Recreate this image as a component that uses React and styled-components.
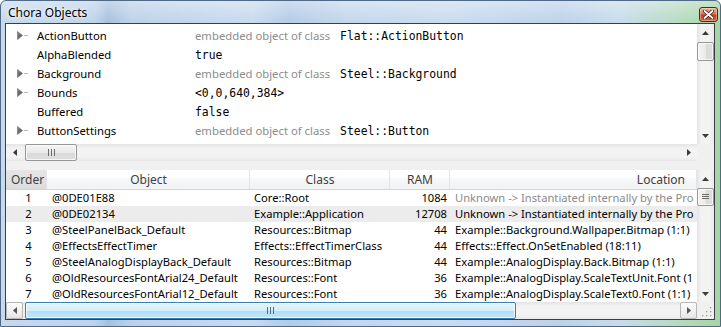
import React from 'react';
import styled, { createGlobalStyle } from 'styled-components';

const SANS = `"Noto Sans", "Open Sans", sans-serif`;
const MONO = `"DejaVu Sans Mono", "Liberation Mono", monospace`;

const GlobalStyle = createGlobalStyle`
  html, body {
    margin: 0;
    padding: 0;
    background: #ffffff;
    overflow: hidden;
  }
  * {
    box-sizing: border-box;
  }
`;

const Window = styled.div`
  width: 721px;
  height: 327px;
  display: flex;
  flex-direction: column;
  padding: 0 5px 6px 4px;
  border: 1px solid #4f6a86;
  border-radius: 6px 6px 0 0;
  background:
    linear-gradient(180deg, rgba(255, 255, 255, 0.35) 0px, rgba(255, 255, 255, 0) 22px),
    linear-gradient(90deg, #c6d9ed 0%, #bed3ea 13%, #a7c0dc 15%, #bcd1e9 18%, #c8daee 35%,
      #b3cbe6 40%, #c3d6ec 48%, #c9dbef 62%, #bcd2ea 78%, #c6dcec 86%, #b5dabc 95%, #a8d4a4 100%);
  font-family: ${SANS};
`;

const TitleBar = styled.div`
  height: 22px;
  display: flex;
  align-items: center;
  justify-content: space-between;
  padding: 1px 0 0 3px;
`;

const Title = styled.span`
  font-size: 12px;
  color: #000;
  text-shadow: 0 0 6px rgba(255, 255, 255, 0.9), 0 0 3px rgba(255, 255, 255, 0.9);
`;

const CloseButton = styled.div`
  width: 19px;
  height: 15px;
  margin-top: 3px;
  margin-right: -3px;
  display: flex;
  align-items: center;
  justify-content: center;
  border: 1px solid #5e2318;
  border-radius: 3px;
  background: linear-gradient(180deg, #eab4a3 0%, #d9775f 45%, #c2401f 55%, #d6654a 100%);
  box-shadow: inset 0 0 0 1px rgba(255, 255, 255, 0.35);
`;

const Client = styled.div`
  flex: 1;
  display: flex;
  flex-direction: column;
  border: 1px solid #3a3f46;
  background: #f0f0f0;
  min-height: 0;
`;

const PropPanel = styled.div`
  height: 137px;
  display: grid;
  grid-template-columns: 1fr 17px;
  grid-template-rows: 1fr 17px;
  background: #fff;
`;

const PropList = styled.div`
  padding-top: 2px;
  overflow: hidden;
`;

const PropRow = styled.div`
  height: 19px;
  display: flex;
  align-items: center;
  font-size: 11.3px;
  color: #000;
`;

const Expander = styled.span`
  width: 31px;
  padding-left: 11px;
  display: flex;
  align-items: center;
`;

const PropName = styled.span`
  width: 158px;
`;

const Muted = styled.span`
  color: #8c8c8c;
  margin-right: 10px;
`;

const Mono = styled.span`
  font-family: ${MONO};
  font-size: 11.4px;
  color: #000;
`;

const VScroll = styled.div`
  display: flex;
  flex-direction: column;
  background: linear-gradient(90deg, #e4e4e4 0%, #f3f3f3 25%, #f3f3f3 75%, #e9e9e9 100%);
`;

const HScroll = styled.div`
  display: flex;
  align-items: stretch;
  background: linear-gradient(180deg, #e4e4e4 0%, #f3f3f3 25%, #f3f3f3 75%, #e9e9e9 100%);
`;

const ArrowButton = styled.div`
  width: 17px;
  height: 17px;
  flex: none;
  display: flex;
  align-items: center;
  justify-content: center;
  border: 1px solid ${(p) => (p.$hot ? '#b6b6b6' : 'transparent')};
  border-radius: 2px;
  background: ${(p) => (p.$hot ? 'linear-gradient(180deg, #fdfdfd, #e6e6e6)' : 'transparent')};
`;

const Track = styled.div`
  flex: 1;
  display: flex;
  flex-direction: ${(p) => (p.$vertical ? 'column' : 'row')};
  align-items: stretch;
  min-width: 0;
  min-height: 0;
`;

const Thumb = styled.div`
  flex: none;
  display: flex;
  align-items: center;
  justify-content: center;
  border: 1px solid ${(p) => (p.$hot ? '#3c7fb1' : '#979797')};
  border-radius: 2px;
  background: ${(p) =>
    p.$hot
      ? 'linear-gradient(180deg, #e6f5fd 0%, #d3edfb 50%, #b2dcf5 51%, #c2e4f8 100%)'
      : p.$vertical
      ? 'linear-gradient(90deg, #f4f4f4 0%, #eaeaea 50%, #dadada 51%, #dedede 100%)'
      : 'linear-gradient(180deg, #f4f4f4 0%, #eaeaea 50%, #dadada 51%, #dedede 100%)'};
  box-shadow: inset 0 0 0 1px rgba(255, 255, 255, 0.7);
`;

const Corner = styled.div`
  background: #f0f0f0;
  display: flex;
  align-items: flex-end;
  justify-content: flex-end;
  padding: 0 2px 2px 0;
`;

const Splitter = styled.div`
  height: 9px;
  background: #f0f0f0;
`;

const ObjPanel = styled.div`
  flex: 1;
  display: grid;
  grid-template-columns: 1fr 17px;
  grid-template-rows: 1fr 17px;
  background: #fff;
  min-height: 0;
`;

const Table = styled.div`
  overflow: hidden;
  font-size: 11.2px;
`;

const COLS = '41px 203px 140px 60px 247px';

const HeaderRow = styled.div`
  height: 20px;
  display: grid;
  grid-template-columns: ${COLS};
  border-bottom: 1px solid #d5d5d5;
  background: linear-gradient(180deg, #ffffff 0%, #ffffff 40%, #f7f8fa 41%, #f1f2f4 100%);
`;

const HeaderCell = styled.div`
  display: flex;
  align-items: center;
  justify-content: ${(p) => p.$align || 'center'};
  padding: 0 ${(p) => (p.$align === 'flex-end' ? '11px' : '4px')} 0 5px;
  border-right: 1px solid #e3e4e6;
  color: #404040;
  font-size: 12px;
  background: ${(p) => (p.$active ? 'linear-gradient(180deg, #e6e6e6, #dcdcdc)' : 'transparent')};
  white-space: nowrap;
  overflow: hidden;
`;

const Row = styled.div`
  height: 16px;
  display: grid;
  grid-template-columns: ${COLS};
  align-items: center;
  background: ${(p) => (p.$highlight ? '#ececec' : '#fff')};
`;

const Cell = styled.div`
  padding: ${(p) => p.$pad || '0 4px'};
  text-align: ${(p) => p.$align || 'left'};
  color: ${(p) => (p.$muted ? '#8a8a8a' : '#000')};
  white-space: nowrap;
  overflow: hidden;
  line-height: 16px;
`;

const Triangle = ({ dir = 'down', color = '#3c3c3c' }) => {
  const pts = {
    up: '0,4 3.5,0 7,4',
    down: '0,0 7,0 3.5,4',
    left: '4,0 4,7 0,3.5',
    right: '0,0 4,3.5 0,7',
  }[dir];
  const vertical = dir === 'up' || dir === 'down';
  return (
    <svg width={vertical ? 7 : 4} height={vertical ? 4 : 7} viewBox={vertical ? '0 0 7 4' : '0 0 4 7'}>
      <polygon points={pts} fill={color} />
    </svg>
  );
};

const TreeArrow = () => (
  <svg width="14" height="9" viewBox="0 0 14 9">
    <defs>
      <linearGradient id="ta" x1="0" y1="0" x2="1" y2="1">
        <stop offset="0" stopColor="#8a8a8a" />
        <stop offset="1" stopColor="#4a4a4a" />
      </linearGradient>
    </defs>
    <polygon points="0.5,0.5 5.5,4.5 0.5,8.5" fill="url(#ta)" stroke="#6a6a6a" strokeWidth="0.6" />
    <line x1="7" y1="4.5" x2="11" y2="4.5" stroke="#b8b8b8" strokeWidth="1" />
  </svg>
);

const GripV = () => (
  <svg width="7" height="6" viewBox="0 0 7 6">
    {[0.5, 2.5, 4.5].map((y) => (
      <line key={y} x1="0" y1={y} x2="7" y2={y} stroke="#6d6d6d" strokeWidth="1" />
    ))}
  </svg>
);

const GripH = ({ color = '#6d6d6d' }) => (
  <svg width="7" height="7" viewBox="0 0 7 7">
    {[0.5, 3.5, 6.5].map((x) => (
      <line key={x} x1={x} y1="0" x2={x} y2="7" stroke={color} strokeWidth="1" />
    ))}
  </svg>
);

const SizeGrip = () => (
  <svg width="11" height="11" viewBox="0 0 11 11">
    {[
      [9, 1],
      [9, 5],
      [5, 5],
      [9, 9],
      [5, 9],
      [1, 9],
    ].map(([x, y]) => (
      <g key={`${x}-${y}`}>
        <rect x={x + 0.6} y={y + 0.6} width="1.4" height="1.4" fill="#ffffff" />
        <rect x={x} y={y} width="1.4" height="1.4" fill="#9c9c9c" />
      </g>
    ))}
  </svg>
);

const CloseGlyph = () => (
  <svg width="11" height="9" viewBox="0 0 11 9">
    <path d="M1.5 1 L9.5 8 M9.5 1 L1.5 8" stroke="#4a1a10" strokeWidth="3.4" strokeLinecap="round" />
    <path d="M1.5 1 L9.5 8 M9.5 1 L1.5 8" stroke="#ffffff" strokeWidth="1.8" strokeLinecap="round" />
  </svg>
);

const props = [
  { name: 'ActionButton', expandable: true, embedded: 'Flat::ActionButton' },
  { name: 'AlphaBlended', value: 'true' },
  { name: 'Background', expandable: true, embedded: 'Steel::Background' },
  { name: 'Bounds', expandable: true, value: '<0,0,640,384>' },
  { name: 'Buffered', value: 'false' },
  { name: 'ButtonSettings', expandable: true, embedded: 'Steel::Button' },
];

// the list shows these texts cut at the column edge
const UNKNOWN = 'Unknown -> Instantiated internally by the Pro';

const objects = [
  { order: 1, object: '@0DE01E88', cls: 'Core::Root', ram: 1084, location: UNKNOWN, muted: true },
  { order: 2, object: '@0DE02134', cls: 'Example::Application', ram: 12708, location: UNKNOWN, highlight: true },
  { order: 3, object: '@SteelPanelBack_Default', cls: 'Resources::Bitmap', ram: 44, location: 'Example::Background.Wallpaper.Bitmap (1:1)' },
  { order: 4, object: '@EffectsEffectTimer', cls: 'Effects::EffectTimerClass', ram: 44, location: 'Effects::Effect.OnSetEnabled (18:11)' },
  { order: 5, object: '@SteelAnalogDisplayBack_Default', cls: 'Resources::Bitmap', ram: 44, location: 'Example::AnalogDisplay.Back.Bitmap (1:1)' },
  { order: 6, object: '@OldResourcesFontArial24_Default', cls: 'Resources::Font', ram: 36, location: 'Example::AnalogDisplay.ScaleTextUnit.Font (1' },
  { order: 7, object: '@OldResourcesFontArial12_Default', cls: 'Resources::Font', ram: 36, location: 'Example::AnalogDisplay.ScaleText0.Font (1:1)' },
];

const App = () => (
  <>
    <GlobalStyle />
    <Window>
      <TitleBar>
        <Title>Chora Objects</Title>
        <CloseButton>
          <CloseGlyph />
        </CloseButton>
      </TitleBar>

      <Client>
        <PropPanel>
          <PropList>
            {props.map((p) => (
              <PropRow key={p.name}>
                <Expander>{p.expandable && <TreeArrow />}</Expander>
                <PropName>{p.name}</PropName>
                {p.embedded ? (
                  <span>
                    <Muted>embedded object of class</Muted>
                    <Mono>{p.embedded}</Mono>
                  </span>
                ) : (
                  <Mono>{p.value}</Mono>
                )}
              </PropRow>
            ))}
          </PropList>

          <VScroll>
            <ArrowButton>
              <Triangle dir="up" />
            </ArrowButton>
            <Track $vertical>
              <Thumb $vertical style={{ height: 19, marginTop: 1 }} />
            </Track>
            <ArrowButton>
              <Triangle dir="down" />
            </ArrowButton>
          </VScroll>

          <HScroll>
            <ArrowButton>
              <Triangle dir="left" />
            </ArrowButton>
            <Track>
              <Thumb style={{ width: 52, marginLeft: 2 }}>
                <GripH />
              </Thumb>
            </Track>
            <ArrowButton>
              <Triangle dir="right" />
            </ArrowButton>
          </HScroll>
          <Corner />
        </PropPanel>

        <Splitter />

        <ObjPanel>
          <Table>
            <HeaderRow>
              <HeaderCell $active $align="flex-start">Order</HeaderCell>
              <HeaderCell>Object</HeaderCell>
              <HeaderCell>Class</HeaderCell>
              <HeaderCell>RAM</HeaderCell>
              <HeaderCell $align="flex-end">Location</HeaderCell>
            </HeaderRow>
            {objects.map((o) => (
              <Row key={o.order} $highlight={o.highlight}>
                <Cell $align="center" $pad="0 0 0 4px">{o.order}</Cell>
                <Cell $pad="0 4px 0 5px">{o.object}</Cell>
                <Cell>{o.cls}</Cell>
                <Cell $align="right" $pad="0 3px 0 0">{o.ram}</Cell>
                <Cell $muted={o.muted} $pad="0 0 0 5px">{o.location}</Cell>
              </Row>
            ))}
          </Table>

          <VScroll>
            <ArrowButton>
              <Triangle dir="up" />
            </ArrowButton>
            <Track $vertical>
              <Thumb $vertical style={{ height: 18, marginTop: 1 }}>
                <GripV />
              </Thumb>
            </Track>
            <ArrowButton>
              <Triangle dir="down" />
            </ArrowButton>
          </VScroll>

          <HScroll>
            <ArrowButton $hot>
              <Triangle dir="left" color="#555" />
            </ArrowButton>
            <Track>
              <Thumb $hot style={{ width: 491, marginLeft: 2 }}>
                <GripH color="#4d6f8a" />
              </Thumb>
            </Track>
            <ArrowButton $hot>
              <Triangle dir="right" color="#555" />
            </ArrowButton>
          </HScroll>
          <Corner>
            <SizeGrip />
          </Corner>
        </ObjPanel>
      </Client>
    </Window>
  </>
);

export default App;
